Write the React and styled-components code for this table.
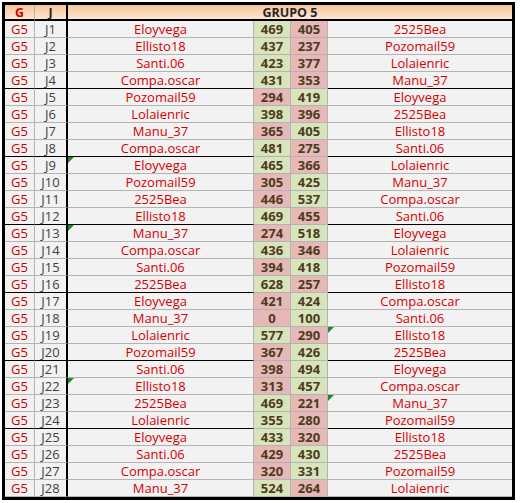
import styled, { createGlobalStyle } from "styled-components";

const GlobalStyle = createGlobalStyle`
  html, body {
    margin: 0;
    padding: 0;
    background: #ffffff;
  }
  body {
    font-family: "Open Sans", "Liberation Sans", sans-serif;
  }
`;

const Page = styled.div`
  padding: 2px;
`;

const Sheet = styled.div`
  width: 507px;
  border: 3px solid #000;
  display: grid;
  grid-template-columns: 30px 33px 186px 37px 37px 184px;
  font-size: 13px;
  background: #f2f2f2;
`;

const HeadCell = styled.div`
  height: 14px;
  line-height: 15px;
  font-size: 12.5px;
  border-bottom: 2px solid #000;
  background: linear-gradient(#f8c59a, #fce6d4);
  text-align: center;
  font-weight: bold;
  color: ${(p) => p.color || "#262626"};
  border-right: ${(p) => p.edge || "none"};
  grid-column: ${(p) => p.span || "auto"};
`;

const Cell = styled.div`
  position: relative;
  height: 16px;
  line-height: 17px;
  text-align: center;
  white-space: nowrap;
  border-bottom: 1px solid ${(p) => (p.$groupEnd ? "#000" : "#b3b3b3")};
  border-right: ${(p) => p.edge || "1px solid #b3b3b3"};
  color: ${(p) => p.color || "#d40000"};
`;

const Score = styled(Cell)`
  font-weight: bold;
  color: #4d3b1c;
  background: ${(p) => (p.$win ? "#d8e4bc" : "#e6b8b7")};
  border-bottom-color: #b3b3b3;
`;

const Flag = styled.span`
  position: absolute;
  left: 0;
  top: 0;
  width: 0;
  height: 0;
  border-top: 6px solid #1f8a1f;
  border-right: 6px solid transparent;
`;

const rows = [
  ["Eloyvega", 469, 405, "2525Bea"],
  ["Ellisto18", 437, 237, "Pozomail59"],
  ["Santi.06", 423, 377, "Lolaienric"],
  ["Compa.oscar", 431, 353, "Manu_37"],
  ["Pozomail59", 294, 419, "Eloyvega"],
  ["Lolaienric", 398, 396, "2525Bea"],
  ["Manu_37", 365, 405, "Ellisto18"],
  ["Compa.oscar", 481, 275, "Santi.06"],
  ["Eloyvega", 465, 366, "Lolaienric"],
  ["Pozomail59", 305, 425, "Manu_37"],
  ["2525Bea", 446, 537, "Compa.oscar"],
  ["Ellisto18", 469, 455, "Santi.06"],
  ["Manu_37", 274, 518, "Eloyvega"],
  ["Compa.oscar", 436, 346, "Lolaienric"],
  ["Santi.06", 394, 418, "Pozomail59"],
  ["2525Bea", 628, 257, "Ellisto18"],
  ["Eloyvega", 421, 424, "Compa.oscar"],
  ["Manu_37", 0, 100, "Santi.06"],
  ["Lolaienric", 577, 290, "Ellisto18"],
  ["Pozomail59", 367, 426, "2525Bea"],
  ["Santi.06", 398, 494, "Eloyvega"],
  ["Ellisto18", 313, 457, "Compa.oscar"],
  ["2525Bea", 469, 221, "Manu_37"],
  ["Lolaienric", 355, 280, "Pozomail59"],
  ["Eloyvega", 433, 320, "Ellisto18"],
  ["Santi.06", 429, 430, "2525Bea"],
  ["Compa.oscar", 320, 331, "Pozomail59"],
  ["Manu_37", 524, 264, "Lolaienric"],
];

// rows (1-based) with the little green marker in a name cell
const flagsLeft = [9, 13, 22];
const flagsRight = [19, 23];

const App = () => {
  return (
    <Page>
      <GlobalStyle />
      <Sheet>
        <HeadCell color="#d40000" edge="1px solid #b3b3b3">G</HeadCell>
        <HeadCell edge="2px solid #000">J</HeadCell>
        <HeadCell span="span 4">GRUPO 5</HeadCell>
        {rows.map(([home, a, b, away], i) => {
          const n = i + 1;
          const end = n % 4 === 0 && n !== rows.length;
          return [
            <Cell key={`g${n}`} $groupEnd={end} color="#cc0000">G5</Cell>,
            <Cell key={`j${n}`} $groupEnd={end} color="#3f3f3f" edge="2px solid #000">
              J{n}
            </Cell>,
            <Cell key={`h${n}`} $groupEnd={end}>
              {flagsLeft.includes(n) && <Flag />}
              {home}
            </Cell>,
            <Score key={`a${n}`} $win={a > b}>{a}</Score>,
            <Score key={`b${n}`} $win={b > a}>{b}</Score>,
            <Cell key={`w${n}`} $groupEnd={end} edge="none">
              {flagsRight.includes(n) && <Flag />}
              {away}
            </Cell>,
          ];
        })}
      </Sheet>
    </Page>
  );
};

export default App;
